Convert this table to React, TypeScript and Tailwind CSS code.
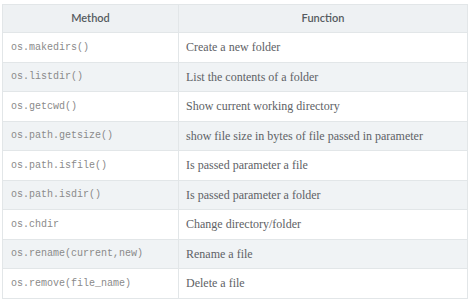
const rows: [string, string][] = [
  ["os.makedirs()", "Create a new folder"],
  ["os.listdir()", "List the contents of a folder"],
  ["os.getcwd()", "Show current working directory"],
  ["os.path.getsize()", "show file size in bytes of file passed in parameter"],
  ["os.path.isfile()", "Is passed parameter a file"],
  ["os.path.isdir()", "Is passed parameter a folder"],
  ["os.chdir", "Change directory/folder"],
  ["os.rename(current,new)", "Rename a file"],
  ["os.remove(file_name)", "Delete a file"],
];

export default function App() {
  return (
    <div className="w-[474px] h-[304px] bg-white pt-[4px] pl-[2px]">
      <table className="w-[466px] border-collapse table-fixed">
        <thead>
          <tr className="h-[28px] bg-[#eef1f3]">
            <th className="w-[176px] border border-[#e2e6e8] font-['Lato',sans-serif] text-[11px] font-semibold text-[#555b60] text-center">
              Method
            </th>
            <th className="border border-[#e2e6e8] font-['Lato',sans-serif] text-[11px] font-semibold text-[#555b60] text-center">
              Function
            </th>
          </tr>
        </thead>
        <tbody>
          {rows.map(([method, fn], i) => (
            <tr
              key={method}
              className={i % 2 === 0 ? "h-[29.5px] bg-white" : "h-[29.5px] bg-[#f0f3f5]"}
            >
              <td className="border border-[#e2e6e8] pl-[8px] font-['Liberation_Mono',monospace] text-[10px] text-[#8a8a8a]">
                {method}
              </td>
              <td className="border border-[#e2e6e8] pl-[7px] font-['Liberation_Serif',serif] text-[12px] text-[#5e6266]">
                {fn}
              </td>
            </tr>
          ))}
        </tbody>
      </table>
    </div>
  );
}
